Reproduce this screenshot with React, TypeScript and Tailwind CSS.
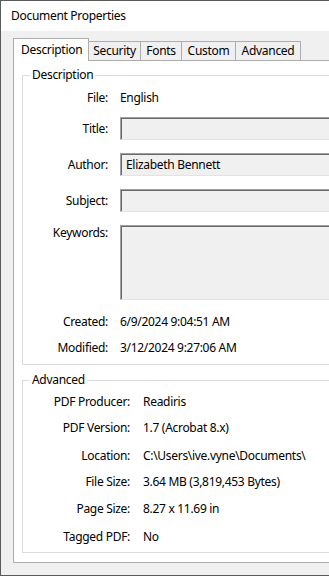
import React from "react";

const font = { fontFamily: '"Noto Sans", "Segoe UI", sans-serif' };

function Box({ h, children }: { h: string; children?: React.ReactNode }) {
  return (
    <div
      className={`${h} w-[260px] bg-[#f0f0f0] border-t border-l border-[#a0a0a0] border-b border-b-[#e3e3e3] shadow-[inset_1px_1px_0_#696969] flex items-center pl-[5px]`}
    >
      {children}
    </div>
  );
}

export default function App() {
  return (
    <div
      className="w-[329px] h-[576px] overflow-hidden flex flex-col border-l border-b border-t border-[#5a5a5a] text-[12px] leading-[16px] tracking-[-0.3px] text-black bg-[#f0f0f0]"
      style={font}
    >
      <div className="h-[30px] bg-white flex items-center pl-[10px] shrink-0">Document Properties</div>
      <div className="flex-1 bg-[#f0f0f0] pt-[7px] pl-[12px]">
        <div className="flex items-end h-[22px]">
          <div className="relative z-10 h-[23px] -mb-px w-[76px] bg-white border-l border-t border-r border-[#adadad] flex items-center pl-[7px] pb-[1px]">
            Description
          </div>
          <div className="h-[19px] w-[52px] border-t border-r border-[#adadad] flex items-center justify-center">Security</div>
          <div className="h-[19px] w-[41px] border-t border-r border-[#adadad] flex items-center justify-center">Fonts</div>
          <div className="h-[19px] w-[54px] border-t border-r border-[#adadad] flex items-center justify-center">Custom</div>
          <div className="h-[19px] w-[65px] border-t border-r border-[#adadad] flex items-center justify-center">Advanced</div>
        </div>
        <div className="w-[340px] h-[503px] bg-white border border-[#adadad] pl-[8px] pt-[6px]">
          <fieldset className="border border-[#dcdcdc] w-[330px]">
            <legend className="ml-[7px] px-[2px]">Description</legend>
            <div className="flex flex-col pb-[8px]">
              <div className="flex items-center h-[16px] mt-[7px]">
                <div className="w-[85px] text-right">File:</div>
                <div className="ml-[12px]">English</div>
              </div>
              <div className="flex items-center h-[23px] mt-[11px]">
                <div className="w-[85px] text-right">Title:</div>
                <div className="ml-[12px]"><Box h="h-[23px]" /></div>
              </div>
              <div className="flex items-center h-[23px] mt-[13px]">
                <div className="w-[85px] text-right">Author:</div>
                <div className="ml-[12px]"><Box h="h-[23px]">Elizabeth Bennett</Box></div>
              </div>
              <div className="flex items-center h-[23px] mt-[13px]">
                <div className="w-[85px] text-right">Subject:</div>
                <div className="ml-[12px]"><Box h="h-[23px]" /></div>
              </div>
              <div className="flex items-start h-[75px] mt-[13px]">
                <div className="w-[85px] text-right">Keywords:</div>
                <div className="ml-[12px]"><Box h="h-[75px]" /></div>
              </div>
              <div className="flex items-center h-[16px] mt-[14px]">
                <div className="w-[85px] text-right">Created:</div>
                <div className="ml-[12px]">6/9/2024 9:04:51 AM</div>
              </div>
              <div className="flex items-center h-[16px] mt-[10px]">
                <div className="w-[85px] text-right">Modified:</div>
                <div className="ml-[12px]">3/12/2024 9:27:06 AM</div>
              </div>
            </div>
          </fieldset>
          <fieldset className="border border-[#dcdcdc] w-[330px] mt-[7px]">
            <legend className="ml-[7px] px-[2px]">Advanced</legend>
            <div className="flex flex-col pb-[7px]">
              {[
                ["PDF Producer:", "Readiris", "mt-[6px]"],
                ["PDF Version:", "1.7 (Acrobat 8.x)", "mt-[10px]"],
                ["Location:", "C:\\Users\\ive.vyne\\Documents\\", "mt-[12px]"],
                ["File Size:", "3.64 MB (3,819,453 Bytes)", "mt-[10px]"],
                ["Page Size:", "8.27 x 11.69 in", "mt-[11px]"],
                ["Tagged PDF:", "No", "mt-[12px]"],
              ].map(([l, v, m]) => (
                <div key={l} className={`flex items-center h-[16px] ${m}`}>
                  <div className="w-[107px] text-right">{l}</div>
                  <div className="ml-[13px] whitespace-nowrap">{v}</div>
                </div>
              ))}
            </div>
          </fieldset>
        </div>
      </div>
    </div>
  );
}
